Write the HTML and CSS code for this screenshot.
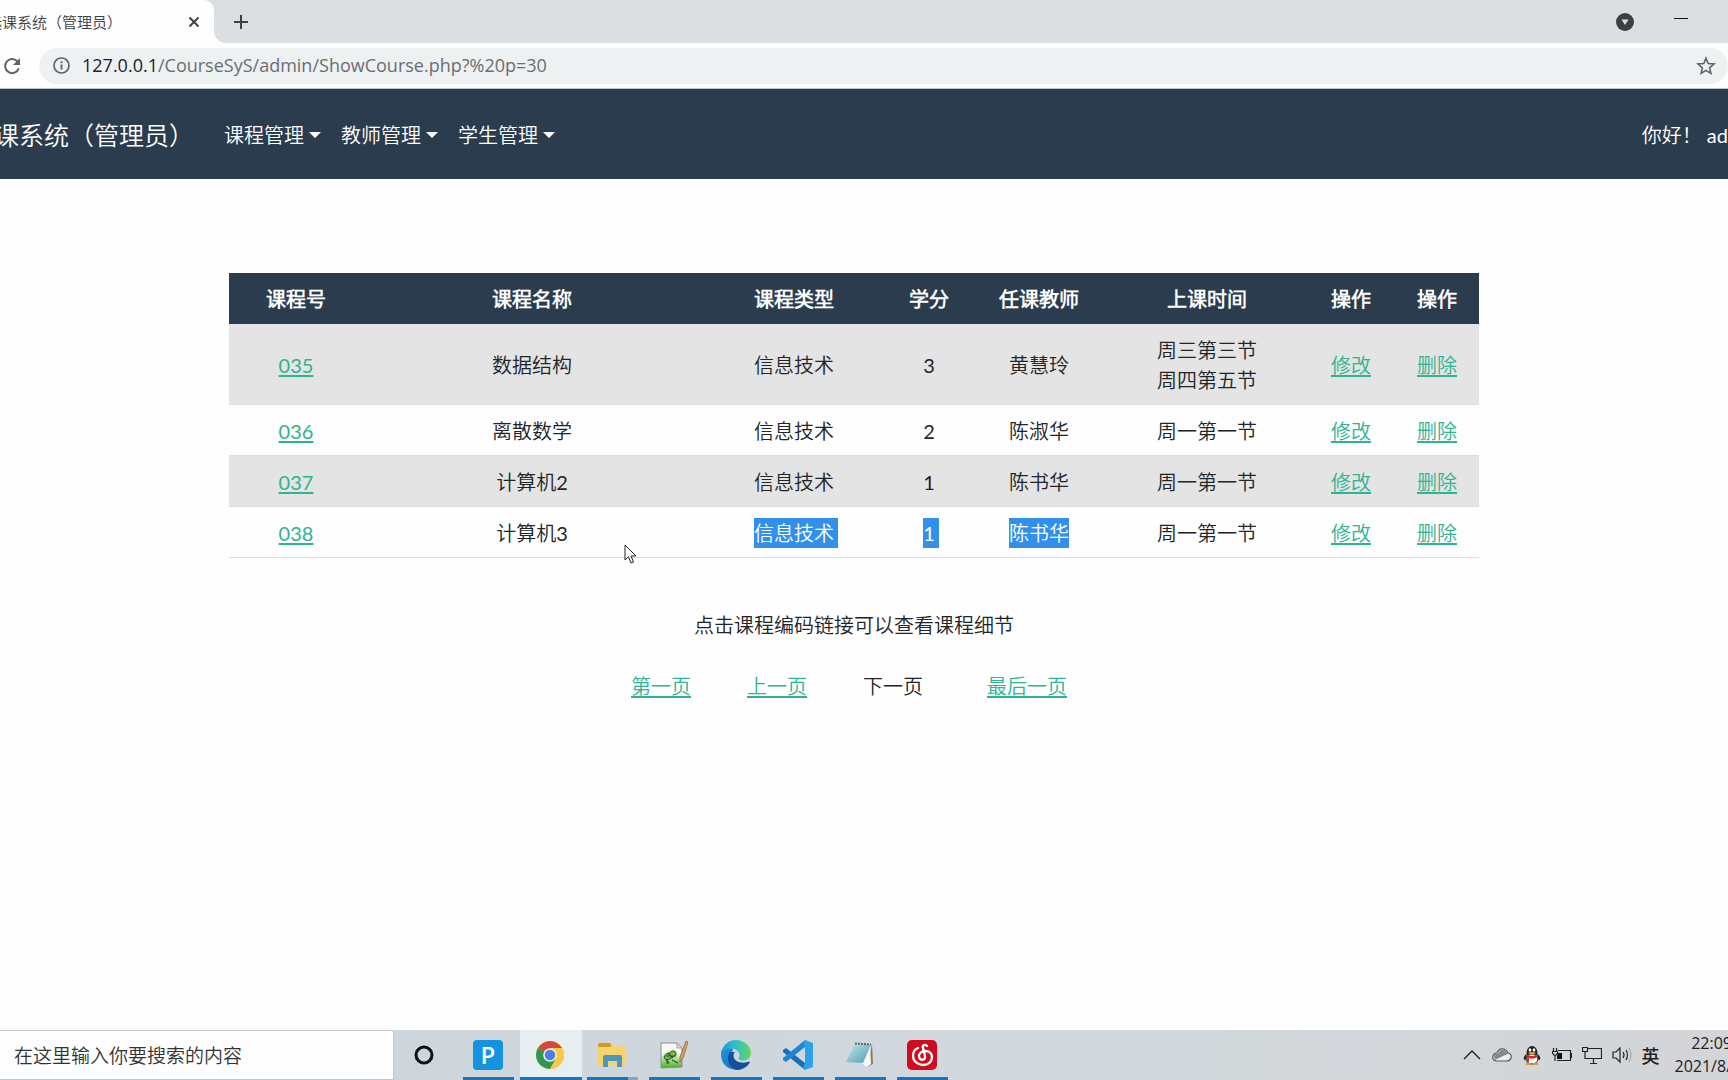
FILE: index.html
```html
<!DOCTYPE html>
<html lang="zh-CN">
<head>
<meta charset="utf-8">
<title>选课系统（管理员）</title>
<link rel="stylesheet" href="styles.css">
</head>
<body>
<header class="browser">
  <div class="tabstrip">
    <div class="tab">
      <span class="tab-title">选课系统（管理员）</span>
      <button class="icon-btn tab-close" aria-label="关闭标签页"><svg width="12" height="12" viewBox="0 0 12 12"><path d="M1.5 1.5l9 9M10.500 1.500l-9 9" stroke="#3c4043" stroke-width="1.900" fill="none"/></svg></button>
      <svg class="tab-curve" width="12" height="12" viewBox="0 0 12 12"><path d="M0 0v12h12A12 12 0 0 1 0 0z" fill="#fdfefd"/></svg>
    </div>
    <button class="icon-btn new-tab" aria-label="新标签页"><svg width="16" height="16" viewBox="0 0 16 16"><path d="M8 1v14M1 8h14" stroke="#3c4043" stroke-width="2" fill="none"/></svg></button>
    <div class="window-controls">
      <button class="icon-btn" aria-label="搜索标签页"><svg width="18" height="18" viewBox="0 0 18 18"><circle cx="9" cy="9" r="9" fill="#3c4043"/><path d="M5.500 6.500h7L9 12z" fill="#dce0e3"/></svg></button>
      <button class="icon-btn minimize" aria-label="最小化"><svg width="14" height="8" viewBox="0 0 14 8"><path d="M0 .5h14" stroke="#111"/></svg></button>
    </div>
  </div>
  <div class="toolbar">
    <button class="icon-btn reload" aria-label="重新加载"><svg width="20" height="20" viewBox="0 0 20 20"><path d="M15.800 6A7 7 0 1 0 16.800 12.200" fill="none" stroke="#5f6368" stroke-width="2"/><path d="M18 2v7h-7z" fill="#5f6368"/></svg></button>
    <div class="omnibox">
      <svg width="17" height="17" viewBox="0 0 17 17"><circle cx="8.500" cy="8.500" r="7.500" fill="none" stroke="#5f6368" stroke-width="1.700"/><path d="M8.500 7.500v5M8.500 4.200v2" stroke="#5f6368" stroke-width="1.900"/></svg>
      <p class="url"><span class="host">127.0.0.1</span>/CourseSyS/admin/ShowCourse.php?%20p=30</p>
      <button class="icon-btn" aria-label="收藏"><svg width="20" height="20" viewBox="0 0 20 20"><path d="M10 2.200l2.200 5.300 5.800.5-4.400 3.800 1.300 5.600L10 14.400l-4.900 3 1.300-5.600L2 8l5.800-.5z" fill="none" stroke="#5f6368" stroke-width="1.600"/></svg></button>
    </div>
  </div>
</header>

<nav class="navbar">
  <a class="brand" href="#">课系统（管理员）</a>
  <div class="menus">
    <a class="menu" href="#">课程管理</a>
    <a class="menu" href="#">教师管理</a>
    <a class="menu" href="#">学生管理</a>
  </div>
  <span class="greeting">你好！ ad</span>
</nav>

<main class="page">
  <div class="container">
    <table class="courses">
      <colgroup><col class="c-id"><col class="c-name"><col class="c-type"><col class="c-credit"><col class="c-teacher"><col class="c-time"><col class="c-edit"><col class="c-delete"></colgroup>
      <thead>
        <tr><th>课程号</th><th>课程名称</th><th>课程类型</th><th>学分</th><th>任课教师</th><th>上课时间</th><th>操作</th><th>操作</th></tr>
      </thead>
      <tbody>
        <tr><td><a href="#">035</a></td><td>数据结构</td><td>信息技术</td><td>3</td><td>黄慧玲</td><td>周三第三节<br>周四第五节</td><td><a href="#">修改</a></td><td><a href="#">删除</a></td></tr>
        <tr><td><a href="#">036</a></td><td>离散数学</td><td>信息技术</td><td>2</td><td>陈淑华</td><td>周一第一节</td><td><a href="#">修改</a></td><td><a href="#">删除</a></td></tr>
        <tr><td><a href="#">037</a></td><td>计算机2</td><td>信息技术</td><td>1</td><td>陈书华</td><td>周一第一节</td><td><a href="#">修改</a></td><td><a href="#">删除</a></td></tr>
        <tr><td><a href="#">038</a></td><td>计算机3</td><td><span class="selected trail">信息技术</span></td><td><span class="selected trail">1</span></td><td><span class="selected">陈书华</span></td><td>周一第一节</td><td><a href="#">修改</a></td><td><a href="#">删除</a></td></tr>
      </tbody>
    </table>
    <p class="hint">点击课程编码链接可以查看课程细节</p>
    <div class="pager">
      <a href="#">第一页</a>
      <a href="#">上一页</a>
      <span>下一页</span>
      <a class="last" href="#">最后一页</a>
    </div>
  </div>
</main>

<footer class="taskbar">
  <input class="search" type="text" placeholder="在这里输入你要搜索的内容" aria-label="搜索">
  <button class="task cortana" aria-label="Cortana"><svg width="20" height="20" viewBox="0 0 20 20"><circle cx="10" cy="10" r="8" fill="none" stroke="#111" stroke-width="3"/></svg></button>
  <button class="task open" aria-label="P"><span class="p-icon">P</span></button>
  <button class="task open active" aria-label="Chrome"><svg width="28" height="28" viewBox="0 0 28 28"><circle cx="14" cy="14" r="14" fill="#f7ca45"/><path d="M14 14L1.900 7A14 14 0 0 1 26.100 7H14z" fill="#d5493a"/><path d="M14 14L1.900 7A14 14 0 0 0 14 28l6-10.500z" fill="#2e9650"/><path d="M14 7h12.100A14 14 0 0 1 14 28l6.100-10.500z" fill="#f7ca45"/><circle cx="14" cy="14" r="6.800" fill="#eef3f4"/><circle cx="14" cy="14" r="5.300" fill="#4c7fe0"/></svg></button>
  <button class="task open grouped" aria-label="文件资源管理器"><svg width="28" height="28" viewBox="0 0 28 28"><path d="M0 4q0-2 2-2h10l2 3v4H0z" fill="#d69a20"/><path d="M0 6h12l3-2h12v20H0z" fill="#f7d36e"/><path d="M5 26V16q0-2 2-2h15q2 0 2 2v10h-5v-6h-9v6z" fill="#5096b8"/></svg></button>
  <button class="task open" aria-label="Notepad++"><svg width="30" height="30" viewBox="0 0 30 30"><defs><linearGradient id="np" x2="0" y2="1"><stop offset=".4" stop-color="#f5faf0"/><stop offset="1" stop-color="#45b01e"/></linearGradient></defs><path d="M2 3h16l5 5v19l-21 1z" fill="url(#np)" stroke="#8a8f8a" stroke-width="1"/><path d="M18 3v5h5z" fill="#dde2dd" stroke="#8a8f8a" stroke-width=".7"/><path d="M5 17q2-5 6-4 1-3 4-2 3 1 2 4l-3 2-5 3-3-1z" fill="#79bd46" stroke="#28541d"/><path d="M7 16h10M9 13l5 5M7 20l3 3M13 20l6 3M7 23h3" fill="none" stroke="#28541d" stroke-width="1.200"/><path d="M27 1l2 1-5 16-3 4v-5z" fill="#dba05b" stroke="#815d3c" stroke-width=".7"/></svg></button>
  <button class="task open" aria-label="Edge"><svg width="30" height="30" viewBox="0 0 30 30"><defs><linearGradient id="e1" x2="1"><stop stop-color="#2094d8"/><stop offset=".5" stop-color="#32bfd0"/><stop offset="1" stop-color="#65d755"/></linearGradient><linearGradient id="e2" y2="1"><stop stop-color="#2094d8"/><stop offset="1" stop-color="#1673c4"/></linearGradient></defs><path d="M0 15C0 7 6 5 12 9L9 20l7 9.900C7 30 0 24 0 15z" fill="url(#e2)"/><path d="M9 12c-5 8 0 17 8 17.900 5-.5 9-3 11.500-7 .6-1-.3-1.600-1.300-1.200C21 24 13 22 12.500 16c0-2 .5-3 1.500-4z" fill="#124f9c"/><path d="M0 14C1 6 7 0 15 0c9 0 15 7 15 13 0 5-4 7.500-8 7.500-3 0-5-1.300-4-3 2-4-1-8-7-9C6 8 1 10 0 14z" fill="url(#e1)"/></svg></button>
  <button class="task open" aria-label="VS Code"><svg width="30" height="30" viewBox="0 0 30 30"><path d="M0 10l3-2L22 23v7L0 12z" fill="#176fb8"/><path d="M0 20l3 2L22 7V0L0 18z" fill="#1d88d2"/><path d="M22 0l8 3v24l-8 3-2-2 2-5V7l-2-5z" fill="#2ba1e8"/></svg></button>
  <button class="task open" aria-label="记事本"><svg width="30" height="30" viewBox="0 0 30 30"><defs><linearGradient id="nt" x2="1" y2="1"><stop stop-color="#c4e6ec"/><stop offset="1" stop-color="#4e9eae"/></linearGradient></defs><path d="M27 4l1 20-6 3z" fill="#8b7d60"/><path d="M25 5l-9 18 6 4 4-3z" fill="#f5f7f5"/><path d="M10 4l16 1-8 18-17-1z" fill="url(#nt)"/><path d="M10 3.500l16 1" stroke="#58666b" stroke-width="2" stroke-dasharray="2 1"/></svg></button>
  <button class="task open" aria-label="网易云音乐"><svg width="30" height="30" viewBox="0 0 30 30"><rect width="30" height="30" rx="5" fill="#d20a1d"/><path d="M20 6c-2-2-5-1-4 2l2 8c1 5-6 5-6 0 0-3 3-5 6-5 5 0 7 3 7 6 0 5-4 8-9 8S6 21 6 16c0-4 2-7 5-8" fill="none" stroke="#fff" stroke-width="2.300" stroke-linecap="round"/></svg></button>
  <div class="tray">
    <svg width="20" height="20" viewBox="0 0 20 20"><path d="M2 14l8-8 8 8" fill="none" stroke="#222" stroke-width="1.400"/></svg>
    <svg width="20" height="20" viewBox="0 0 20 20"><path d="M4 16q-4-1-3-5 1-3 4-3 2-5 7-4 3 1 4 4 4 1 3 5-1 3-4 3z" fill="#eee" stroke="#555" stroke-width="1.200"/><path d="M2 11q2-3 4-2 2-5 7-4l3 4-5 2-8 4z" fill="#888"/></svg>
    <svg width="20" height="20" viewBox="0 0 20 20"><path d="M4 9q-4 5-1 6l2-2M16 9q4 5 1 6l-2-2" fill="#222"/><ellipse cx="10" cy="8" rx="5.500" ry="7" fill="#222"/><ellipse cx="10" cy="14" rx="6" ry="5" fill="#fff" stroke="#222"/><ellipse cx="8" cy="5" rx="1.300" ry="1.800" fill="#fff"/><ellipse cx="12" cy="5" rx="1.300" ry="1.800" fill="#fff"/><path d="M4 9q6 4 12 0v3q-6 3-9 1v4H5v-4z" fill="#d92b20"/><path d="M6 8q4-2 8 0-4 3-8 0z" fill="#f1a51b"/><path d="M4 18h5v2H4zm7 0h5v2h-5z" fill="#e79528"/></svg>
    <svg width="20" height="20" viewBox="0 0 20 20"><path d="M6 5.500h12.500v10H5M18.500 8.500h1v4h-1M1.500 3v3M4.500 3v3M.5 6.500h5v2l-2 2h-1l-2-2zM3 10v6" fill="none" stroke="#222" stroke-width="1.200"/><path d="M6 8h4v6H5v-3z" fill="#111"/></svg>
    <svg width="20" height="20" viewBox="0 0 20 20"><path d="M6 3.500h13.500v10H3M11.500 14v4M8 18.500h7M.5 2.500h5v4h-5zM3 7v7" fill="none" stroke="#222" stroke-width="1.200"/></svg>
    <svg width="20" height="20" viewBox="0 0 20 20"><path d="M1 7h3l4-4v14l-4-4H1z" fill="none" stroke="#222" stroke-width="1.200"/><path d="M11 7q2 3 0 6M14 5q3 5 0 10" fill="none" stroke="#222" stroke-width="1.200"/><path d="M17 3q4 7 0 14" fill="none" stroke="#999"/></svg>
    <span class="ime">英</span>
    <p class="clock">22:09<br>2021/8/</p>
  </div>
</footer>
<svg class="cursor" width="13" height="20" viewBox="0 0 13 20"><path d="M1 1v15l3.500-3.300L7 19l2.500-1L7 12h5z" fill="#fff" stroke="#222"/></svg>
</body>
</html>
```
FILE: styles.css
```css
* { box-sizing: border-box; }
body {
  margin: 0;
  min-height: 100vh;
  display: flex;
  flex-direction: column;
  overflow-x: hidden;
  background: #fdfefd;
  color: #212529;
  font: 400 20px/30px Lato, "Noto Sans CJK SC DemiLight", "Noto Sans CJK SC", sans-serif;
}
p { margin: 0; }
svg { display: block; flex: none; }
button { border: 0; padding: 0; background: none; font: inherit; }
.icon-btn { display: grid; place-items: center; flex: none; }

.tabstrip { display: flex; height: 43px; background: #dbdfe2; }
.tab {
  position: relative;
  display: flex;
  align-items: center;
  justify-content: flex-end;
  gap: 66px;
  width: 214px;
  padding-right: 14px;
  background: #fdfefd;
  border-top-right-radius: 10px;
}
.tab-title {
  flex: none;
  font-family: "Noto Sans CJK SC DemiLight", "Noto Sans CJK SC", sans-serif;
  font-size: 15px;
  color: #3c4043;
  white-space: nowrap;
}
.tab-curve { position: absolute; left: 100%; bottom: 0; }
.new-tab { margin-left: 19px; }
.window-controls { display: flex; align-items: center; gap: 40px; margin-left: auto; padding-right: 40px; }
.toolbar {
  display: flex;
  align-items: center;
  gap: 17px;
  height: 46px;
  padding-left: 2px;
  border-bottom: 1px solid #b9c6d0;
}
.omnibox {
  flex: 1;
  display: flex;
  align-items: center;
  gap: 12px;
  height: 36px;
  padding: 0 12px 0 14px;
  border-radius: 18px;
  background: #eef1f2;
}
.url { flex: 1; padding-bottom: 2px; font: 400 18px/30px "Open Sans", sans-serif; color: #6a6e72; }
.host { color: #202124; }

.navbar {
  display: flex;
  align-items: center;
  height: 90px;
  padding-top: 2px;
  background: #2a3c4e;
  color: #fff;
  white-space: nowrap;
}
.navbar a { color: #fff; text-decoration: none; }
.brand { margin-left: -6px; margin-right: 30px; font-size: 25px; }
.menus { display: flex; gap: 20px; }
.menu { display: flex; align-items: center; gap: 5px; }
.menu::after {
  content: "";
  border: 6px solid transparent;
  border-top-color: #fff;
  border-bottom: 0;
}
.greeting { margin-left: auto; }

.page { flex: 1; padding: 94px 20px 40px 0; }
.container { max-width: 1250px; margin: 0 auto; text-align: center; }
.page a { color: #2fb392; text-underline-offset: 2px; }
.courses { width: 100%; table-layout: fixed; border-collapse: collapse; }
.c-id { width: 134px; }
.c-name { width: 338px; }
.c-type { width: 186px; }
.c-credit { width: 84px; }
.c-teacher { width: 136px; }
.c-time { width: 200px; }
.c-edit { width: 88px; }
.c-delete { width: 84px; }
.courses th, .courses td { padding: 11px 0 9px; border-bottom: 1px solid #dcdfe1; }
.courses th { background: #2a3c4e; color: #fff; font-weight: 700; border-bottom-color: #2a3c4e; }
.courses tbody tr:nth-child(odd) { background: #e3e4e3; }
.selected { display: inline-block; background: #338fec; color: #fff; }
.trail { padding-right: 4px; margin-right: -4px; }
.hint { margin-top: 52px; }
.pager { display: flex; justify-content: center; gap: 56px; margin-top: 31px; padding-right: 10px; }
.last { margin-left: 8px; }

.taskbar {
  display: flex;
  height: 50px;
  background: linear-gradient(90deg, #cbd5dc, #d2d8dc 60%, #d3d5d8);
}
.search {
  width: 394px;
  padding: 0 14px;
  border: 1px solid #c3c7ca;
  border-left: 0;
  background: #fdfefd;
  font: 400 19px/30px "Noto Sans CJK SC DemiLight", "Noto Sans CJK SC", sans-serif;
}
.search::placeholder { color: #333; opacity: 1; }
.task { position: relative; display: grid; place-items: center; flex: none; width: 62px; padding-right: 2px; }
.cortana { margin-right: 2px; }
.open::after {
  content: "";
  position: absolute;
  left: 5px;
  right: 6px;
  bottom: 0;
  height: 3px;
  background: #1376c2;
}
.active { background: #e7eeef; }
.active::after { left: 0; right: 0; }
.grouped::after { background: linear-gradient(90deg, #1376c2 80%, #7fa7c6 80%); }
.p-icon {
  width: 30px;
  height: 30px;
  border-radius: 4px;
  background: #1693df;
  color: #fff;
  font: 600 24px/30px "Open Sans", sans-serif;
}
.tray { display: flex; align-items: center; gap: 10px; margin-left: auto; }
.ime { font: 500 18px/30px "Noto Sans CJK SC", sans-serif; color: #222; }
.clock {
  margin: 0 -4px 0 5px;
  font: 400 16px/23px "Open Sans", sans-serif;
  color: #222;
  text-align: right;
}
.cursor { position: absolute; left: 624px; top: 544px; }
```
